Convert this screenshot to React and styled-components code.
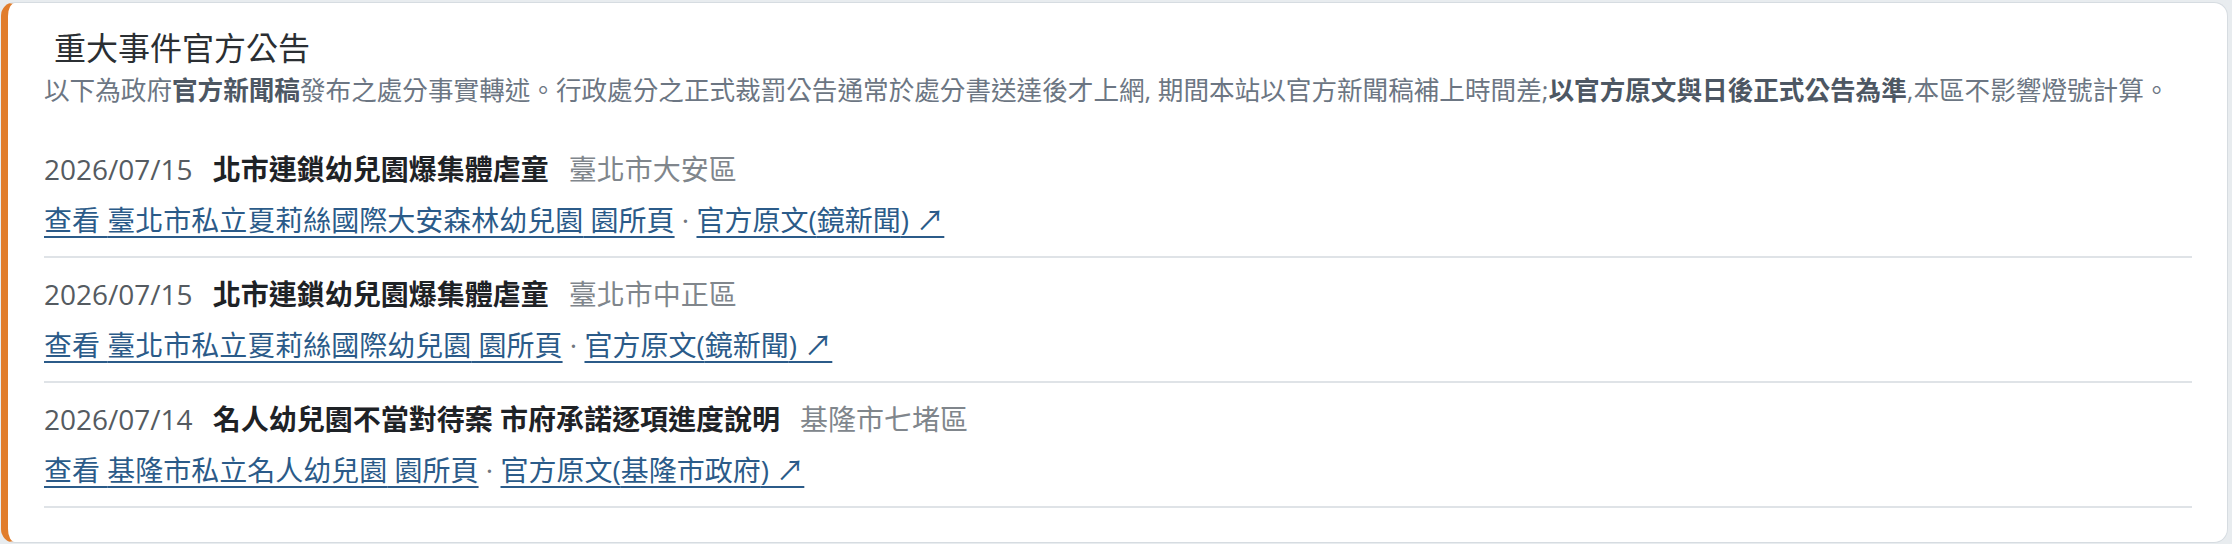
import React from 'react';
import styled, { createGlobalStyle } from 'styled-components';

const GlobalStyle = createGlobalStyle`
  html, body {
    margin: 0;
    padding: 0;
    height: 544px;
    background: #e8ecef;
    font-family: "Open Sans", "Noto Sans CJK TC", sans-serif;
  }
`;

const notices = [
  {
    date: '2026/07/15',
    title: '北市連鎖幼兒園爆集體虐童',
    area: '臺北市大安區',
    school: '臺北市私立夏莉絲國際大安森林幼兒園',
    source: '鏡新聞',
  },
  {
    date: '2026/07/15',
    title: '北市連鎖幼兒園爆集體虐童',
    area: '臺北市中正區',
    school: '臺北市私立夏莉絲國際幼兒園',
    source: '鏡新聞',
  },
  {
    date: '2026/07/14',
    title: '名人幼兒園不當對待案 市府承諾逐項進度說明',
    area: '基隆市七堵區',
    school: '基隆市私立名人幼兒園',
    source: '基隆市政府',
  },
];

const App = () => {
  return (
    <Page>
      <GlobalStyle />
      <Card>
        <Heading>重大事件官方公告</Heading>
        <Intro>
          以下為政府<strong>官方新聞稿</strong>發布之處分事實轉述。行政處分之正式裁罰公告通常於處分書送達後才上網, 期間本站以官方新聞稿補上時間差;<strong>以官方原文與日後正式公告為準</strong>,本區不影響燈號計算。
        </Intro>
        <List>
          {notices.map((n, i) => (
            <Item key={i}>
              <Meta>
                <DateText>{n.date}</DateText>
                <Title>{n.title}</Title>
                <Area>{n.area}</Area>
              </Meta>
              <Links>
                <Link href="#">查看 {n.school} 園所頁</Link>
                <Sep> · </Sep>
                <Link href="#">官方原文({n.source}) ↗</Link>
              </Links>
            </Item>
          ))}
        </List>
      </Card>
    </Page>
  );
};

const Page = styled.div`
  padding: 2px 4px 2px 1px;
`;

const Card = styled.section`
  background: #fff;
  border: 1px solid #d6dce1;
  border-left: 7px solid #e17d2c;
  border-radius: 14px;
  padding: 24px 35px 34px 36px;
  display: flex;
  flex-direction: column;
`;

const Heading = styled.h2`
  margin: 0 0 3px 10px;
  font-size: 32px;
  line-height: 42px;
  font-weight: 400;
  color: #2b2f33;
`;

const Intro = styled.p`
  margin: 0 0 23px;
  font-size: 25.6px;
  line-height: 38px;
  color: #6c7683;
  white-space: nowrap;

  strong {
    font-weight: 700;
    color: #4d5763;
  }
`;

const List = styled.ul`
  list-style: none;
  margin: 0;
  padding: 0;
`;

const Item = styled.li`
  padding: 15px 0;
  border-bottom: 2px solid #dfe3e7;
  display: flex;
  flex-direction: column;
  gap: 9px;
`;

const Meta = styled.div`
  display: flex;
  align-items: baseline;
  gap: 20px;
  font-size: 28px;
  line-height: 42px;
`;

const DateText = styled.span`
  color: #555b61;
`;

const Title = styled.span`
  font-weight: 700;
  color: #1e2226;
`;

const Area = styled.span`
  color: #80868c;
`;

const Links = styled.div`
  font-size: 28px;
  line-height: 42px;
  color: #7a8188;
`;

const Link = styled.a`
  color: #2b5b89;
  text-decoration: underline;
  text-decoration-thickness: 2px;
  text-underline-offset: 5px;
`;

const Sep = styled.span`
  color: #6f767d;
`;

export default App;
